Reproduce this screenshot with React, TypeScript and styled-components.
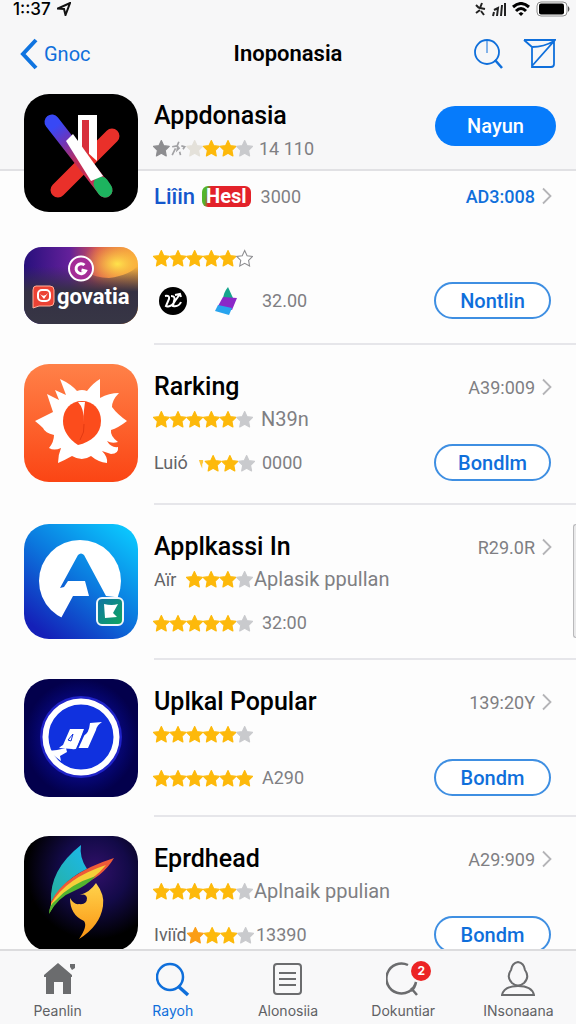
import React from "react";
import styled, { createGlobalStyle, css } from "styled-components";

const BLUE = "#0f6fdb";
const GOLD = "#fdb90b";
const GREY = "#c9cacd";

const GlobalStyle = createGlobalStyle`
  * { box-sizing: border-box; }
  body { margin: 0; background: #fdfdfd; }
  body, button { font-family: Roboto, "Liberation Sans", sans-serif; }
  h1, h2, ul, p { margin: 0; padding: 0; }
  svg { display: block; flex: none; }
`;

const Page = styled.div`
  display: flex;
  flex-direction: column;
  width: 100%;
  height: 100vh;
  overflow: hidden;
  color: #000;
`;

const StatusBar = styled.div`
  display: flex;
  justify-content: space-between;
  align-items: center;
  height: 18px;
  padding: 0 6px 0 13px;
  background: #f7f7f8;
  font-family: Inter, "Liberation Sans", sans-serif;
  font-size: 17px;
  font-weight: 500;
  line-height: 18px;
`;

const StatusGroup = styled.div`
  display: flex;
  align-items: center;
  gap: 6px;
`;

const NavBar = styled.header`
  display: grid;
  grid-template-columns: 1fr auto 1fr;
  align-items: center;
  height: 72px;
  padding: 0 20px;
  background: #f7f7f8;
`;

const BackLink = styled.a`
  display: flex;
  align-items: center;
  gap: 6px;
  color: ${BLUE};
  font-size: 20px;
  text-decoration: none;
`;

const NavTitle = styled.h1`
  font-size: 22px;
  font-weight: 600;
  line-height: 28px;
`;

const NavActions = styled.div`
  display: flex;
  justify-content: flex-end;
  gap: 20px;
`;

const IconButton = styled.button`
  padding: 0;
  border: 0;
  background: none;
  color: ${BLUE};
`;

const Content = styled.main`
  flex: 1;
  min-height: 0;
  overflow-y: auto;
  scrollbar-width: none;
`;

const Hero = styled.section`
  display: flex;
  gap: 16px;
  padding: 4px 20px 14px 24px;
  background: linear-gradient(#f7f7f8 79px, #e1e1e4 79px, #e1e1e4 81px, #fdfdfd 81px);
`;

const HeroTop = styled.div`
  display: flex;
  justify-content: space-between;
  padding-top: 6px;
`;

const AppList = styled.ul`
  list-style: none;
`;

const Row = styled.li<{ $bottom: number }>`
  position: relative;
  display: flex;
  gap: 16px;
  padding-left: 24px;
  ${(p) => css`--row-bottom: ${p.$bottom}px;`}
`;

const IconHolder = styled.div`
  flex: none;
  margin-top: 19px;
`;

const Body = styled.div<{ $top: number }>`
  flex: 1;
  min-width: 0;
  padding: ${(p) => p.$top}px 24px var(--row-bottom) 0;
  border-bottom: 2px solid #e6e6ea;
`;

const HeroBody = styled.div`
  flex: 1;
  min-width: 0;
`;

const Line = styled.div<{ $height?: number; $above?: number; $right?: number }>`
  display: flex;
  align-items: center;
  justify-content: space-between;
  height: ${(p) => p.$height ?? 32}px;
  margin-top: ${(p) => p.$above ?? 0}px;
  padding-right: ${(p) => p.$right ?? 0}px;
`;

const AppName = styled.h2`
  font-size: 25px;
  font-weight: 500;
  line-height: 32px;
  white-space: nowrap;
`;

const Rating = styled.div`
  display: flex;
  align-items: center;
`;

const RatingSlot = styled.div`
  display: flex;
  align-items: center;
  justify-content: space-between;
  width: 100px;
  margin-left: -1px;
`;

const Lead = styled.span`
  padding-left: 1px;
  color: #636366;
  font-size: 18px;
`;

const Note = styled.span<{ $gap: number; $large?: boolean }>`
  margin-left: ${(p) => p.$gap}px;
  color: #7f7f83;
  font-size: ${(p) => (p.$large ? 20 : 18)}px;
  white-space: nowrap;
`;

const Price = styled.a<{ $accent?: boolean }>`
  display: flex;
  align-items: center;
  gap: 7px;
  color: ${(p) => (p.$accent ? BLUE : "#7f7f83")};
  font-size: 18px;
  font-weight: ${(p) => (p.$accent ? 500 : 400)};
  text-decoration: none;
  white-space: nowrap;
`;

const OutlineButton = styled.button`
  width: 117px;
  height: 37px;
  margin-right: 1px;
  padding: 0;
  border: 2px solid #3f8fe2;
  border-radius: 19px;
  background: #fff;
  color: ${BLUE};
  font-size: 20px;
  font-weight: 500;
`;

const SolidButton = styled.button`
  width: 121px;
  height: 40px;
  margin-top: 6px;
  padding: 0;
  border: 0;
  border-radius: 20px;
  background: #067bfb;
  color: #fff;
  font-size: 20px;
  font-weight: 500;
`;

const Brands = styled.div`
  display: flex;
  align-items: center;
`;

const BrandWord = styled.span`
  color: #1457cc;
  font-size: 22px;
  font-weight: 500;
`;

const BrandTag = styled.span`
  margin-left: 7px;
  padding: 0 4px;
  border-radius: 6px;
  background: linear-gradient(100deg, #53b52c 10%, #e3222a 18%);
  color: #fff;
  font-size: 20px;
  font-weight: 700;
  line-height: 21px;
`;

const BrandMarks = styled.div`
  display: flex;
  align-items: center;
  gap: 28px;
  width: 99px;
  padding-left: 5px;
`;

const SideHandle = styled.span`
  position: absolute;
  top: 19px;
  right: 0;
  width: 3px;
  height: 114px;
  border: 1px solid #b9b9bb;
  border-right: 0;
  border-radius: 4px 0 0 4px;
  background: #e9e9ea;
`;

const TabBar = styled.nav`
  display: flex;
  flex: none;
  height: 75px;
  border-top: 2px solid #dcdcde;
  background: #f8f8f9;
  font-family: Inter, "Liberation Sans", sans-serif;
`;

const Tab = styled.a<{ $active?: boolean }>`
  position: relative;
  display: flex;
  flex: 1;
  flex-direction: column;
  align-items: center;
  gap: 5px;
  padding-top: 10px;
  color: ${(p) => (p.$active ? BLUE : "#606164")};
  font-size: 14px;
  line-height: 18px;
  text-decoration: none;
`;

const Badge = styled.span`
  position: absolute;
  top: 10px;
  left: 50%;
  width: 20px;
  height: 20px;
  margin-left: 8px;
  border-radius: 50%;
  background: #ec2424;
  color: #fff;
  font-size: 12px;
  font-weight: 700;
  line-height: 20px;
  text-align: center;
`;

const STAR = "M10 0.6l2.9 6.1 6.6.9-4.8 4.7 1.2 6.7L10 15.8 4.1 19l1.2-6.7L.5 7.6l6.6-.9z";

/* g gold, x grey, d dark grey, p pale, o outline, b broken outline, t sliver, r orange */
function Stars({ kinds }: { kinds: string }) {
  const n = kinds.length;
  return (
    <svg width={Math.round((n * 50) / 3)} height="18" viewBox={`0 -1 ${n * 20} 21`} aria-label="rating" role="img">
      {kinds.split("").map((k, i) => {
        const t = `translate(${i * 20} 0)`;
        if (k === "o") return <path key={i} d={STAR} transform={t} fill="#fff" stroke="#8d8d90" strokeWidth="1.3" />;
        if (k === "b")
          return <path key={i} transform={t} d="M3 8l6-1 2-5M7 10l-4 8M10 7l-1 5 3-3M14 7l4 1-2 3M12 14l1 4" fill="none" stroke="#a2a2a5" strokeWidth="2" />;
        if (k === "t") return <path key={i} transform={t} d="M13 6h5v3l-1 2v5l-2-4z" fill="#fdc63b" />;
        const fill = k === "g" ? GOLD : k === "d" ? "#8d8d90" : k === "p" ? "#e4e1da" : k === "r" ? "#fb9d16" : GREY;
        return <path key={i} d={STAR} transform={t} fill={fill} stroke={fill} strokeWidth="1.4" strokeLinejoin="round" />;
      })}
    </svg>
  );
}

const Chevron = () => (
  <svg width="10" height="18" viewBox="0 0 10 18" fill="none" stroke="#b4b4b7" strokeWidth="1.8">
    <path d="M1 1.5l7.5 7.5L1 16.5" />
  </svg>
);

const CrossIcon = () => (
  <svg width="114" height="118" viewBox="0 0 114 118">
    <defs>
      <linearGradient id="bar" gradientUnits="userSpaceOnUse" x1="26" y1="24" x2="84" y2="100">
        <stop offset="0.1" stopColor="#3848f5" />
        <stop offset="0.28" stopColor="#6a36bd" />
        <stop offset="0.55" stopColor="#c52d55" />
      </linearGradient>
    </defs>
    <rect width="114" height="118" rx="25" />
    <path d="M34 96L88 42" stroke="#e9302a" strokeWidth="15" strokeLinecap="round" />
    <path d="M54 21h19v46L54 50z" fill="#fff" />
    <path d="M58 26h7v36l-7-8z" fill="#d8303c" />
    <path d="M28 28L81 96" stroke="url(#bar)" strokeWidth="15" strokeLinecap="round" />
    <path d="M77 90l4 6" stroke="#1db45f" strokeWidth="15" strokeLinecap="round" />
    <path d="M42 47l7-7 30 42-12 5z" fill="#fff" />
  </svg>
);

const GovatiaIcon = () => (
  <svg width="114" height="77" viewBox="0 0 114 77">
    <defs>
      <linearGradient id="sky" x1="0" y1="0" x2="1" y2="0">
        <stop offset="0" stopColor="#28107c" />
        <stop offset="0.4" stopColor="#63209a" />
        <stop offset="0.65" stopColor="#d65251" />
        <stop offset="1" stopColor="#f8a136" />
      </linearGradient>
      <radialGradient id="sun" cx="0.82" cy="0.22" r="0.32">
        <stop offset="0" stopColor="#ffe34b" />
        <stop offset="1" stopColor="#ffb33a" stopOpacity="0" />
      </radialGradient>
      <linearGradient id="dusk" x1="0" y1="0" x2="0" y2="1">
        <stop offset="0.25" stopColor="#33304a" stopOpacity="0" />
        <stop offset="0.58" stopColor="#343043" />
        <stop offset="1" stopColor="#373645" />
      </linearGradient>
      <clipPath id="wide"><rect width="114" height="77" rx="18" /></clipPath>
    </defs>
    <g clipPath="url(#wide)">
      <rect width="114" height="77" fill="url(#sky)" />
      <rect width="114" height="77" fill="url(#sun)" />
      <path d="M0 0h40q14 30 45 31 22-3 29-13v59H0z" fill="url(#dusk)" />
    </g>
    <circle cx="57" cy="21.5" r="12" fill="#a42c96" stroke="#fff" strokeWidth="2" />
    <path d="M60.5 18a5 5 0 1 0 1 6l-4-1" fill="none" stroke="#fff" strokeWidth="3" />
    <path d="M12 39h14q4 0 4 4v12q0 4-4 4H15l-6 2V43q0-4 3-4z" fill="#ec4234" stroke="#ffb09c" />
    <rect x="14" y="43" width="12" height="11" rx="4" fill="none" stroke="#fff" strokeWidth="2" />
    <path d="M16 47q4 4 8-1l-4 6z" fill="#fff" />
    <text x="33" y="57" fill="#fff" fontFamily="Roboto, sans-serif" fontSize="22" fontWeight="700">govatia</text>
  </svg>
);

const SunIcon = () => (
  <svg width="114" height="118" viewBox="0 0 114 118">
    <defs>
      <linearGradient id="orange" x1="0" y1="0" x2="0" y2="1">
        <stop offset="0" stopColor="#ff8148" />
        <stop offset="1" stopColor="#fb4514" />
      </linearGradient>
    </defs>
    <rect width="114" height="118" rx="25" fill="url(#orange)" />
    <path
      fill="#fff"
      d="M11 57L29 48 23 30 35 36 31 26 42 31 36 15Q47 20 53 27 58 25 63 27 69 19 76 15L76 34Q85 29 95 29 88 36 88 43 93 50 103 57 94 64 87 66 86 72 94 78 88 80 83 77 87 84 94 83 95 90 87 90L78 87Q84 93 83 99 74 98 67 92 58 98 48 92 41 96 34 99 34 91 37 84 30 87 25 84 30 78 30 71 21 69 19 64 16 61 11 57z"
    />
    <path d="M58 37c11 0 19 8 19 20 0 13-10 21-23 24-9-6-15-14-15-24 0-12 8-20 19-20z" fill="#fc4c1c" />
    <path d="M54 38h7q-2 10-1 20 0-14-6-20z" fill="#fff" />
    <path d="M60 60q1 8-4 16" stroke="#e43a12" fill="none" />
  </svg>
);

const LetterIcon = () => (
  <svg width="114" height="115" viewBox="0 0 114 115">
    <defs>
      <linearGradient id="ocean" gradientUnits="userSpaceOnUse" x1="96" y1="0" x2="14" y2="106">
        <stop offset="0" stopColor="#0bc5fd" />
        <stop offset="0.5" stopColor="#0b78de" />
        <stop offset="1" stopColor="#1420b8" />
      </linearGradient>
      <linearGradient id="leaf" x1="0" y1="0" x2="1" y2="1">
        <stop offset="0" stopColor="#0e72a8" />
        <stop offset="1" stopColor="#10a85b" />
      </linearGradient>
    </defs>
    <rect width="114" height="115" rx="25" fill="url(#ocean)" />
    <circle cx="56" cy="57" r="41" fill="#fff" />
    <path fill="url(#ocean)" d="M54 31q3-3 6 0l22 41 18 2-10 30H38l-2-8 13-24h16l-4-15H44l-4 6-4 1z" />
    <rect x="73" y="74" width="26" height="27" rx="5" fill="url(#leaf)" stroke="#f1f7fb" strokeWidth="2" />
    <path d="M80 80q8 2 14 0l-5 9 4 4-12 1z" fill="#fff" />
  </svg>
);

const RingIcon = () => (
  <svg width="114" height="118" viewBox="0 0 114 118">
    <defs>
      <radialGradient id="night">
        <stop offset="0.5" stopColor="#0a0a90" />
        <stop offset="0.85" stopColor="#04035f" />
        <stop offset="1" stopColor="#03004c" />
      </radialGradient>
    </defs>
    <rect width="114" height="118" rx="25" fill="url(#night)" />
    <circle cx="57" cy="58" r="41" fill="#2023c8" />
    <circle cx="57" cy="58" r="35.5" fill="#1031df" stroke="#fff" strokeWidth="6" />
    <path d="M24 72l9-1 9-2 1 4-7 4 1 5z" fill="#fff" />
    <path d="M46 50h14l-7 19q-2 2-5 1l-13-1q2-2 4-3z" fill="#fff" />
    <path d="M66 44l12-1q-5 3-6 8l-8 18H53l6-12q6-2 7-13z" fill="#fff" />
    <path d="M44 61l5-6-2 7z" fill="none" stroke="#1031df" />
    <path d="M62 50l-9 20" stroke="#1031df" strokeWidth="2" />
  </svg>
);

const FlameIcon = () => (
  <svg width="114" height="115" viewBox="0 0 114 115">
    <defs>
      <radialGradient id="glow" cx="0.62" cy="0.3" r="0.6">
        <stop offset="0" stopColor="#31106a" />
        <stop offset="0.5" stopColor="#130a48" />
        <stop offset="1" stopColor="#000" />
      </radialGradient>
      <linearGradient id="teal" x1="0.8" y1="0" x2="0" y2="1">
        <stop offset="0" stopColor="#1cb8e6" />
        <stop offset="1" stopColor="#27b09a" />
      </linearGradient>
      <linearGradient id="flame" x1="0" y1="0" x2="0" y2="1">
        <stop offset="0" stopColor="#ffd34c" />
        <stop offset="1" stopColor="#fb9412" />
      </linearGradient>
    </defs>
    <rect width="114" height="115" rx="25" fill="url(#glow)" />
    <path d="M57 9q-2 12 6 24Q42 42 27 66q-2-32 30-57z" fill="url(#teal)" />
    <path d="M27 66Q40 38 90 22 78 42 56 49 38 54 27 74z" fill="#ee5a38" />
    <path d="M27 68Q42 42 82 29 70 44 52 51 36 56 26 76z" fill="#f6d03a" />
    <path d="M25 78Q25 69 31 65 46 48 72 40 62 50 50 55 34 61 25 78z" fill="#54b42f" />
    <path d="M72 47Q81 59 79 70 76 90 55 103 64 90 60 85 46 79 46 62 50 69 55 68 63 69 63 62 62 57 56 59 66 56 72 47z" fill="url(#flame)" />
  </svg>
);

type RatingInfo = { lead?: string; stars: string; note?: string; gap?: number; large?: boolean };

type App = {
  name: string;
  icon: React.ReactNode;
  price: string;
  second: RatingInfo;
  third: RatingInfo;
  action?: string;
  bottom: number;
  handle?: boolean;
};

const apps: App[] = [
  {
    name: "Rarking", icon: <SunIcon />, price: "A39:009", action: "Bondlm", bottom: 22,
    second: { stars: "gggggx", note: "N39n", gap: 8, large: true },
    third: { lead: "Luió", stars: "tggx", note: "0000", gap: 9 },
  },
  {
    name: "Applkassi In", icon: <LetterIcon />, price: "R29.0R", bottom: 17, handle: true,
    second: { lead: "Aïr", stars: "gggx", note: "Aplasik ppullan", gap: 1, large: true },
    third: { stars: "gggggx", note: "32:00", gap: 9 },
  },
  {
    name: "Uplkal Popular", icon: <RingIcon />, price: "139:20Y", action: "Bondm", bottom: 19,
    second: { stars: "gggggx" },
    third: { stars: "gggggg", note: "A290", gap: 9 },
  },
  {
    name: "Eprdhead", icon: <FlameIcon />, price: "A29:909", action: "Bondm", bottom: 19,
    second: { stars: "gggggx", note: "Aplnaik ppulian", gap: 1, large: true },
    third: { lead: "Iviïd", stars: "rggx", note: "13390", gap: 3 },
  },
];

function RatingLine({ lead, stars, note, gap = 9, large }: RatingInfo) {
  return (
    <Rating>
      <RatingSlot>
        {lead && <Lead>{lead}</Lead>}
        <Stars kinds={stars} />
      </RatingSlot>
      {note && <Note $gap={gap} $large={large}>{note}</Note>}
    </Rating>
  );
}

export default function App() {
  return (
    <Page>
      <GlobalStyle />
      <StatusBar>
        <StatusGroup>
          <span>1::37</span>
          <svg width="14" height="14" viewBox="0 0 14 14" fill="none" stroke="#111" strokeWidth="2">
            <path d="M1 6.5L13 1 8.5 13 7 7z" />
          </svg>
        </StatusGroup>
        <StatusGroup>
          <svg width="11" height="14" viewBox="0 0 11 14" fill="none" stroke="#222" strokeWidth="2">
            <path d="M1 3l3 3M7 1L5 6l5 1M1 11l4-3M6 9l3 4" />
          </svg>
          <svg width="14" height="15" viewBox="0 0 14 15" fill="none" stroke="#222" strokeWidth="2">
            <path d="M1 14l1-4M5 14l1-8-4 2M9 14l1-11M13 14V1" />
          </svg>
          <svg width="18" height="14" viewBox="0 0 18 14" fill="none" stroke="#000" strokeWidth="3">
            <path d="M1 5q8-7 16 0M4 9q5-5 10 0" />
            <path d="M9 10l2.5 1.5L9 14l-2.5-2.5z" fill="#000" stroke="none" />
          </svg>
          <svg width="34" height="16" viewBox="0 0 34 16">
            <rect x="1" y="1" width="30" height="14" rx="4" fill="#fff" stroke="#8c8c8c" />
            <rect x="3" y="2.5" width="25" height="11" rx="2" />
            <path d="M32 5q3 3 0 6z" fill="#555" />
          </svg>
        </StatusGroup>
      </StatusBar>

      <NavBar>
        <BackLink href="#back">
          <svg width="18" height="32" viewBox="0 0 18 32" fill="none" stroke="#0f74e0" strokeWidth="4">
            <path d="M16 2L3 16l13 14" />
          </svg>
          Gnoc
        </BackLink>
        <NavTitle>Inoponasia</NavTitle>
        <NavActions>
          <IconButton aria-label="Search">
            <svg width="29" height="32" viewBox="0 0 29 32" fill="none" stroke="currentColor" strokeWidth="1.8">
              <circle cx="13" cy="14" r="12" />
              <path d="M21 22l7 8" strokeWidth="2.5" />
              <path d="M13 3v12" strokeWidth="1" />
            </svg>
          </IconButton>
          <IconButton aria-label="Compose">
            <svg width="33" height="32" viewBox="0 0 33 32" fill="none" stroke="currentColor" strokeWidth="1.8">
              <path d="M1 2h31L9 28M1 2l8 7q12 0 22-6M9 9v20h19q3 0 3-3V3" />
            </svg>
          </IconButton>
        </NavActions>
      </NavBar>

      <Content>
        <Hero>
          <CrossIcon />
          <HeroBody>
            <HeroTop>
              <div>
                <AppName>Appdonasia</AppName>
                <Line>
                  <Rating>
                    <RatingSlot><Stars kinds="dbpggx" /></RatingSlot>
                    <Note $gap={6}>14 110</Note>
                  </Rating>
                </Line>
              </div>
              <SolidButton>Nayun</SolidButton>
            </HeroTop>
            <Line $height={36} $above={14} $right={4}>
              <Brands>
                <BrandWord>Liîin</BrandWord>
                <BrandTag>Hesl</BrandTag>
                <Note $gap={10}>3000</Note>
              </Brands>
              <Price href="#featured" $accent>AD3:008<Chevron /></Price>
            </Line>
          </HeroBody>
        </Hero>

        <AppList>
          <Row $bottom={24}>
            <IconHolder><GovatiaIcon /></IconHolder>
            <Body $top={20}>
              <Line $height={20}><RatingLine stars="gggggo" /></Line>
              <Line $height={37} $above={14}>
                <Brands>
                  <BrandMarks>
                    <svg width="28" height="28" viewBox="0 0 28 28">
                      <circle cx="14" cy="14" r="14" />
                      <path d="M6 9q5-1 4 3l-3 7q5 2 9-5l5-7M12 9q5 0 3 5l-1 5q6 1 8-4M16 8l5-1 1 3" fill="none" stroke="#fff" strokeWidth="2" />
                    </svg>
                    <svg width="22" height="28" viewBox="0 0 22 28">
                      <path d="M13 0l5 11-10 2q0-7 5-13z" fill="#16a58d" />
                      <path d="M8 10l14 1-5 12-14-4z" fill="#8b28c8" />
                      <path d="M3 18l14 3-3 7-14-4z" fill="#28a4ee" />
                    </svg>
                  </BrandMarks>
                  <Note $gap={9}>32.00</Note>
                </Brands>
                <OutlineButton>Nontlin</OutlineButton>
              </Line>
            </Body>
          </Row>
          {apps.map((app) => (
            <Row key={app.name} $bottom={app.bottom}>
              <IconHolder>{app.icon}</IconHolder>
              <Body $top={26}>
                <Line>
                  <AppName>{app.name}</AppName>
                  <Price href="#details">{app.price}<Chevron /></Price>
                </Line>
                <Line><RatingLine {...app.second} /></Line>
                <Line $height={37} $above={9}>
                  <RatingLine {...app.third} />
                  {app.action && <OutlineButton>{app.action}</OutlineButton>}
                </Line>
              </Body>
              {app.handle && <SideHandle />}
            </Row>
          ))}
        </AppList>
      </Content>

      <TabBar>
        <Tab href="#home">
          <svg width="34" height="36" viewBox="0 0 34 36" fill="#6b6c6e">
            <path d="M3 14L17 2l14 12v2h-1v17h-8V21h-9v12H5V16H3z" />
            <path d="M29 3h5v4l-3 2-2-3z" />
          </svg>
          Peanlin
        </Tab>
        <Tab href="#search" $active>
          <svg width="34" height="36" viewBox="0 0 34 36" fill="none" stroke="currentColor" strokeWidth="2.5">
            <circle cx="14" cy="16" r="13" />
            <path d="M22 25l10 9" strokeWidth="3.5" />
          </svg>
          Rayoh
        </Tab>
        <Tab href="#lists">
          <svg width="34" height="36" viewBox="0 0 34 36" fill="none" stroke="#6b6c6e" strokeWidth="2">
            <rect x="3" y="3" width="27" height="30" rx="3" />
            <path d="M8 12h17M8 18h17M8 24h17" />
          </svg>
          Alonosiia
        </Tab>
        <Tab href="#updates">
          <svg width="34" height="36" viewBox="0 0 34 36" fill="none" stroke="#6b6c6e" strokeWidth="2.5">
            <path d="M22 4A15 15 0 1 0 30 21Q29 27 25 30M25 27l6 7" />
          </svg>
          <Badge>2</Badge>
          Dokuntiar
        </Tab>
        <Tab href="#account">
          <svg width="34" height="36" viewBox="0 0 34 36" fill="none" stroke="#6b6c6e" strokeWidth="2">
            <path d="M17 1q6 1 7 8 5 7-1 13-6 5-12 0-6-6-1-13 1-7 7-8z" />
            <path d="M1 34q2-9 16-9t16 9z" />
          </svg>
          INsonaana
        </Tab>
      </TabBar>
    </Page>
  );
}
